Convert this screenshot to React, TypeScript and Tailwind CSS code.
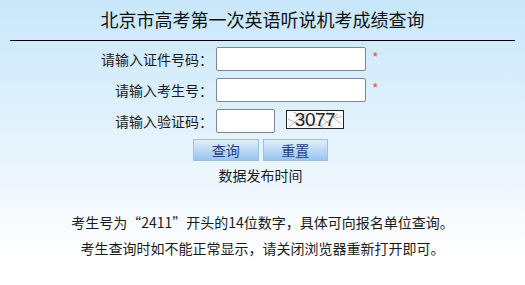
export default function App() {
  const font = { fontFamily: '"Noto Sans CJK SC", "Noto Sans", sans-serif' };
  return (
    <div
      className="h-[285px] w-full overflow-hidden bg-gradient-to-b from-[#c8e7fb] via-[#eef7fd] via-[65%] to-white to-[90%] text-[#1a1a1a]"
      style={font}
    >
      <h1 className="pt-[7px] text-center text-[18px] leading-[24px] text-[#111]">
        北京市高考第一次英语听说机考成绩查询
      </h1>
      <div className="mx-[10px] mt-[9px] border-t border-black" />

      <div className="mt-[6px] flex flex-col gap-[7px]">
        <FormRow label="请输入证件号码：" required />
        <FormRow label="请输入考生号：" required />
        <div className="flex h-[24px] items-center">
          <span className="w-[213px] text-right text-[14px] leading-[24px]">请输入验证码：</span>
          <input className="ml-[3px] h-[24px] w-[59px] rounded-[2px] border border-[#7d8791] bg-white outline-none" />
          <Captcha />
        </div>
      </div>

      <div className="ml-[193px] mt-[6px] w-[135px]">
        <div className="flex gap-[4px]">
          <button className="h-[22px] w-[66px] border border-[#9fbfdf] bg-gradient-to-b from-[#e2eefa] to-[#98c4ef] text-[14px] leading-[20px] text-[#1f3f86]">
            查询
          </button>
          <button className="h-[22px] w-[66px] border border-[#9fbfdf] bg-gradient-to-b from-[#e2eefa] to-[#98c4ef] text-[14px] leading-[20px] text-[#1f3f86]">
            重置
          </button>
        </div>
        <p className="mt-[4px] text-center text-[14px] leading-[20px]">数据发布时间</p>
      </div>

      <div className="mt-[24px] text-center text-[14px] leading-[26px]">
        <p>考生号为“2411”开头的14位数字，具体可向报名单位查询。</p>
        <p>考生查询时如不能正常显示，请关闭浏览器重新打开即可。</p>
      </div>
    </div>
  );
}

function FormRow({ label, required }: { label: string; required?: boolean }) {
  return (
    <div className="flex h-[24px] items-center">
      <span className="w-[213px] text-right text-[14px] leading-[24px]">{label}</span>
      <input className="ml-[3px] h-[24px] w-[150px] rounded-[2px] border border-[#7d8791] bg-white outline-none" />
      {required && (
        <span className="ml-[6px] mt-[3px] self-start text-[14px] leading-[14px] text-[#e0603c]">*</span>
      )}
    </div>
  );
}

function Captcha() {
  return (
    <svg width="58" height="19" viewBox="0 0 58 19" className="ml-[11px] -mt-[4px]">
      <rect x="0.5" y="0.5" width="57" height="18" fill="#fbfbfb" stroke="#222" />
      <g stroke="#9a9a9a" strokeWidth="0.7" fill="none">
        <path d="M3 17 L20 3" />
        <path d="M8 2 L26 16" />
        <path d="M30 2 L46 17" />
        <path d="M34 17 L52 4" />
        <path d="M40 1 L55 14" />
        <path d="M2 9 L14 15" />
        <path d="M44 3 Q50 10 56 6" />
        <path d="M22 17 Q30 12 38 18" />
      </g>
      <text
        x="29"
        y="16"
        textAnchor="middle"
        fontSize="19"
        fontFamily="Liberation Sans, Arial, sans-serif"
        fill="#222"
        letterSpacing="-0.5"
      >
        3077
      </text>
    </svg>
  );
}
